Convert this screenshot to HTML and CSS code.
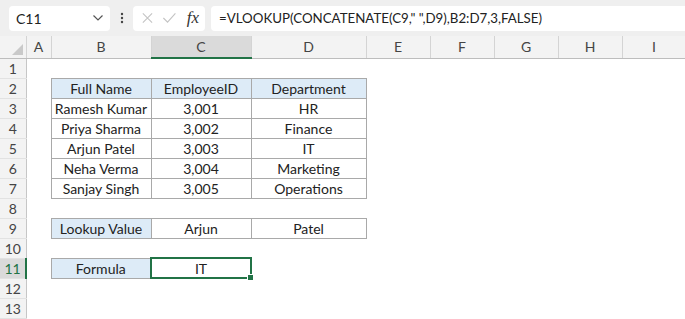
FILE: index.html
```html
<!DOCTYPE html>
<html lang="en">
<head>
    <meta charset="UTF-8">
    <meta name="viewport" content="width=device-width, initial-scale=1.0">
    <title>VLOOKUP with CONCATENATE</title>
    <link rel="stylesheet" href="styles.css">
</head>
<body>

    <div class="formula-bar">
        <div class="name-box">
            <span>C11</span>
            <svg width="12" height="8" viewBox="0 0 12 8"><path d="M1.5 1.5 L6 6 L10.5 1.5" fill="none" stroke="#555" stroke-width="1.2"/></svg>
        </div>
        <div class="grip">
            <svg width="4" height="12" viewBox="0 0 4 12"><circle cx="2" cy="2" r="1.2" fill="#444"/><circle cx="2" cy="6" r="1.2" fill="#444"/><circle cx="2" cy="10" r="1.2" fill="#444"/></svg>
        </div>
        <div class="fx-box">
            <svg width="14" height="14" viewBox="0 0 14 14"><path d="M2 2 L12 12 M12 2 L2 12" stroke="#c4c4c4" stroke-width="1.2"/></svg>
            <svg width="16" height="14" viewBox="0 0 16 14"><path d="M1.5 7 L6 11.5 L14.5 2" fill="none" stroke="#c4c4c4" stroke-width="1.2"/></svg>
            <span class="fx">fx</span>
        </div>
        <div class="formula-input">=VLOOKUP(CONCATENATE(C9," ",D9),B2:D7,3,FALSE)</div>
    </div>

    <table class="sheet">
        <colgroup>
            <col style="width:26px">
            <col style="width:25px">
            <col style="width:100px">
            <col style="width:100px">
            <col style="width:115px">
            <col style="width:64px">
            <col style="width:64px">
            <col style="width:64px">
            <col style="width:64px">
            <col style="width:64px">
        </colgroup>
        <thead>
            <tr>
                <th class="corner"><span class="tri"></span></th>
                <th>A</th>
                <th>B</th>
                <th class="col-active">C</th>
                <th>D</th>
                <th>E</th>
                <th>F</th>
                <th>G</th>
                <th>H</th>
                <th>I</th>
            </tr>
        </thead>
        <tbody>
            <tr><th>1</th><td></td><td></td><td></td><td></td><td></td><td></td><td></td><td></td><td></td></tr>
            <tr><th>2</th><td></td><td class="box head">Full Name</td><td class="box head">EmployeeID</td><td class="box head">Department</td><td></td><td></td><td></td><td></td><td></td></tr>
            <tr><th>3</th><td></td><td class="box">Ramesh Kumar</td><td class="box">3,001</td><td class="box">HR</td><td></td><td></td><td></td><td></td><td></td></tr>
            <tr><th>4</th><td></td><td class="box">Priya Sharma</td><td class="box">3,002</td><td class="box">Finance</td><td></td><td></td><td></td><td></td><td></td></tr>
            <tr><th>5</th><td></td><td class="box">Arjun Patel</td><td class="box">3,003</td><td class="box">IT</td><td></td><td></td><td></td><td></td><td></td></tr>
            <tr><th>6</th><td></td><td class="box">Neha Verma</td><td class="box">3,004</td><td class="box">Marketing</td><td></td><td></td><td></td><td></td><td></td></tr>
            <tr><th>7</th><td></td><td class="box">Sanjay Singh</td><td class="box">3,005</td><td class="box">Operations</td><td></td><td></td><td></td><td></td><td></td></tr>
            <tr><th>8</th><td></td><td></td><td></td><td></td><td></td><td></td><td></td><td></td><td></td></tr>
            <tr><th>9</th><td></td><td class="box head">Lookup Value</td><td class="box">Arjun</td><td class="box">Patel</td><td></td><td></td><td></td><td></td><td></td></tr>
            <tr><th>10</th><td></td><td></td><td></td><td></td><td></td><td></td><td></td><td></td><td></td></tr>
            <tr><th class="row-active">11</th><td></td><td class="box head">Formula</td><td class="active">IT<span class="handle"></span></td><td></td><td></td><td></td><td></td><td></td><td></td></tr>
            <tr><th>12</th><td></td><td></td><td></td><td></td><td></td><td></td><td></td><td></td><td></td></tr>
            <tr><th>13</th><td></td><td></td><td></td><td></td><td></td><td></td><td></td><td></td><td></td></tr>
            <tr class="tail"><th></th><td></td><td></td><td></td><td></td><td></td><td></td><td></td><td></td><td></td></tr>
        </tbody>
    </table>

</body>
</html>
```

FILE: styles.css
```css
body {
    margin: 0;
    font-family: Lato, "Open Sans", sans-serif;
    color: #222;
    background: #fff;
    overflow: hidden;
}

/* top formula bar */
.formula-bar {
    display: flex;
    align-items: center;
    height: 36px;
    padding: 0 0 0 9px;
    background: #efefef;
    box-sizing: border-box;
}
.name-box {
    display: flex;
    align-items: center;
    justify-content: space-between;
    width: 101px;
    height: 25px;
    padding: 0 6px 0 7px;
    box-sizing: border-box;
    background: #fff;
    border-radius: 4px;
    font-size: 14px;
}
.grip {
    display: flex;
    align-items: center;
    width: 23px;
    justify-content: center;
}
.fx-box {
    display: flex;
    align-items: center;
    gap: 8px;
    width: 72px;
    height: 25px;
    padding: 0 6px 0 8px;
    box-sizing: border-box;
    background: #fff;
    border-radius: 4px;
}
.fx {
    font-family: "Liberation Serif", serif;
    font-style: italic;
    font-size: 17px;
    color: #333;
    margin-left: 2px;
}
.formula-input {
    flex: 1;
    height: 25px;
    margin-left: 6px;
    padding-left: 8px;
    background: #fff;
    border-radius: 4px 0 0 4px;
    font-size: 13.3px;
    line-height: 25px;
    white-space: nowrap;
}

/* grid */
.sheet {
    table-layout: fixed;
    width: 686px;
    border-collapse: collapse;
    font-size: 14px;
}
.sheet tr {
    height: 20px;
}
.sheet th {
    font-weight: normal;
    color: #444;
    background: #f3f3f3;
    padding: 0;
    text-align: center;
}
.sheet thead th {
    height: 21px;
    border-right: 1px solid #d4d4d4;
    border-bottom: 1px solid #bdbdbd;
}
.sheet tbody th {
    border-right: 1px solid #c6c6c6;
    border-bottom: 1px solid #e2e2e2;
    font-size: 14px;
}
.sheet td {
    padding: 0;
    text-align: center;
    white-space: nowrap;
    overflow: hidden;
}
.corner {
    position: relative;
}
.tri {
    position: absolute;
    right: 3px;
    bottom: 3px;
    width: 0;
    height: 0;
    border-left: 11px solid transparent;
    border-bottom: 11px solid #c9c9c9;
}
.sheet thead th.col-active {
    background: #dadada;
    border-bottom: 2px solid #217346;
}
.sheet tbody th.row-active {
    background: #dadada;
    border-right: 2px solid #217346;
    color: #217346;
}
.box {
    border: 1px solid #a9a9a9;
}
.head {
    background: #ddebf7;
}
.active {
    position: relative;
    border: 2px solid #217346;
    overflow: visible !important;
}
.handle {
    position: absolute;
    right: -4px;
    bottom: -4px;
    width: 5px;
    height: 5px;
    background: #217346;
    border: 1px solid #fff;
}
```
